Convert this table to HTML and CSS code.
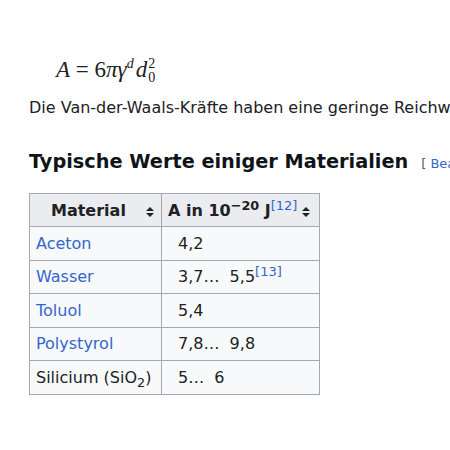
FILE: index.html
```html
<!DOCTYPE html>
<html>
<head>
<meta charset="utf-8">
<link rel="stylesheet" href="styles.css">
</head>
<body>
<div class="page">
  <div class="formula"><i>A</i> = 6<i>πγ</i><span class="m"><i>d</i></span><i>d</i><span class="ss"><span>2</span><span>0</span></span></div>
  <p class="text">Die Van-der-Waals-Kräfte haben eine geringe Reichweite.</p>
  <h2 class="head"><span>Typische Werte einiger Materialien</span><span class="edit">[ <a>Bearbeiten</a> ]</span></h2>
  <table class="wt">
    <colgroup><col class="k1"><col class="k2"></colgroup>
    <thead>
      <tr><th class="c1"><span class="hl">Material</span><span class="sort"></span></th><th class="c2"><span class="hl">A in 10<sup>−20</sup> J<sup class="ref">[12]</sup></span><span class="sort"></span></th></tr>
    </thead>
    <tbody>
      <tr><td><a>Aceton</a></td><td class="v">4,2</td></tr>
      <tr><td><a>Wasser</a></td><td class="v">3,7…&nbsp; 5,5<sup class="ref">[13]</sup></td></tr>
      <tr><td><a>Toluol</a></td><td class="v">5,4</td></tr>
      <tr><td><a>Polystyrol</a></td><td class="v">7,8…&nbsp; 9,8</td></tr>
      <tr><td>Silicium (SiO<sub>2</sub>)</td><td class="v">5…&nbsp; 6</td></tr>
    </tbody>
  </table>
</div>
</body>
</html>
```
FILE: styles.css
```css
html, body { margin: 0; padding: 0; background: #fff; }
body { font-family: "DejaVu Sans", sans-serif; color: #202122; overflow: hidden; width: 450px; height: 450px; }
.page { padding-left: 29px; white-space: nowrap; }
.formula { font-family: "Liberation Serif", serif; font-size: 23px; padding-top: 55px; padding-left: 27px; height: 34px; line-height: 30px; }
.formula .m { font-size: 14px; position: relative; top: -9px; margin-right: 2px; }
.ss { display: inline-flex; flex-direction: column; font-size: 14px; line-height: 14px; vertical-align: 9px; margin-left: 1px; }
.text { margin: 8px 0 0; font-size: 16px; line-height: 22px; }
.head { margin: 30px 0 0; font-size: 19.3px; font-weight: bold; color: #101418; line-height: 26px; display: flex; align-items: baseline; }
.edit { font-size: 13px; font-weight: normal; color: #54595d; margin-left: 13px; }
.edit a { color: #3366cc; }
.wt { margin-top: 16px; border-collapse: collapse; font-size: 16px; background: #f8f9fa; table-layout: fixed; width: 290px; }
.k1 { width: 132px; }
.k2 { width: 158px; }
.wt th, .wt td { border: 1px solid #a2a9b1; padding: 0 6px; height: 32.5px; text-align: left; }
.wt th { background: #eaecf0; font-weight: bold; height: 32px; }
.wt th .hl { display: inline-block; }
.wt th.c1 { padding-left: 21px; }
.wt th.c1 .hl { width: 95px; }
.wt th.c2 .hl { width: 134px; }
.sort { display: inline-block; width: 8px; height: 10px; vertical-align: -1px; position: relative; }
.sort::before { content: ""; position: absolute; left: 0; top: 0; border-left: 4px solid transparent; border-right: 4px solid transparent; border-bottom: 4px solid #202122; }
.sort::after { content: ""; position: absolute; left: 0; top: 6px; border-left: 4px solid transparent; border-right: 4px solid transparent; border-top: 4px solid #202122; }
.wt td a { color: #3366cc; }
.wt td.v { padding-left: 16px; }
sup { font-size: 0.8em; line-height: 0; }
sup.ref { font-weight: normal; color: #3366cc; font-size: 13px; }
sub { font-size: 0.8em; line-height: 0; }
```
